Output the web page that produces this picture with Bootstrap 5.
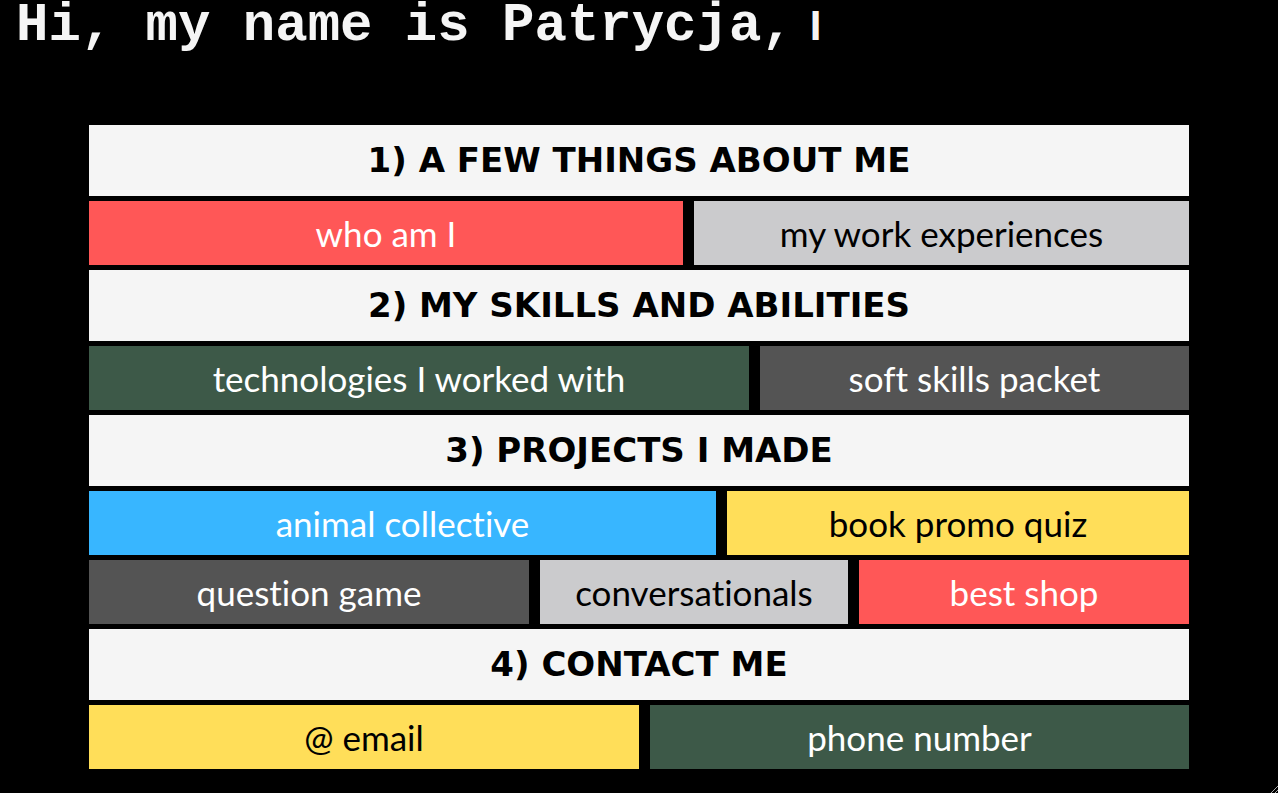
<!DOCTYPE html>
<html lang="en">
<head>
<meta charset="utf-8">
<meta name="viewport" content="width=device-width, initial-scale=1">
<title>Patrycja</title>
<link href="https://cdn.jsdelivr.net/npm/bootstrap@5.3.0/dist/css/bootstrap.min.css" rel="stylesheet">
<style>
  body { background: #000; font-family: Lato, sans-serif; }
  .intro { height: 125px; padding-left: 16px; color: #f5f5f5; font: 700 54px/52px "Liberation Mono", monospace; }
  .intro-word { font: 700 42px/52px "Liberation Sans", sans-serif; margin-left: 16px; }
  .board { max-width: 1100px; gap: 5px; }
  .board-title { background: #f5f5f5; color: #000; font: 700 34px/71px "DejaVu Sans", sans-serif; }
  .tiles { gap: 5px 1%; }
  .tile { flex-basis: 0; font-size: 35px; line-height: 48px; padding: 8px 0; color: #fff; text-align: center; text-decoration: none; font-variant-ligatures: none; }
  .red { background: #ff5757; }
  .silver { background: #cbcbcd; color: #000; }
  .green { background: #3d5948; }
  .gray { background: #545454; }
  .blue { background: #38b6ff; }
  .yellow { background: #ffde59; color: #000; }
  .w54 { flex-grow: 54; } .w45 { flex-grow: 45; }
  .w60 { flex-grow: 60; } .w39 { flex-grow: 39; }
  .w57 { flex-grow: 57; } .w42 { flex-grow: 42; }
  .w40 { flex-grow: 40; } .w28 { flex-grow: 28; } .w30 { flex-grow: 30; }
  .w50 { flex-grow: 50; } .w49 { flex-grow: 49; }
</style>
</head>
<body>
<h1 class="intro m-0 text-nowrap">Hi, my name is Patrycja,<span class="intro-word">I</span></h1>
<main class="board d-flex flex-column mx-auto">
  <h2 class="board-title m-0 text-center">1) A FEW THINGS ABOUT ME</h2>
  <div class="tiles d-flex">
    <a href="#" class="tile red w54">who am I</a>
    <a href="#" class="tile silver w45">my work experiences</a>
  </div>
  <h2 class="board-title m-0 text-center">2) MY SKILLS AND ABILITIES</h2>
  <div class="tiles d-flex">
    <a href="#" class="tile green w60">technologies I worked with</a>
    <a href="#" class="tile gray w39">soft skills packet</a>
  </div>
  <h2 class="board-title m-0 text-center">3) PROJECTS I MADE</h2>
  <div class="tiles d-flex">
    <a href="#" class="tile blue w57">animal collective</a>
    <a href="#" class="tile yellow w42">book promo quiz</a>
  </div>
  <div class="tiles d-flex">
    <a href="#" class="tile gray w40">question game</a>
    <a href="#" class="tile silver w28">conversationals</a>
    <a href="#" class="tile red w30">best shop</a>
  </div>
  <h2 class="board-title m-0 text-center">4) CONTACT ME</h2>
  <div class="tiles d-flex">
    <a href="#" class="tile yellow w50">@ email</a>
    <a href="#" class="tile green w49">phone number</a>
  </div>
</main>
<svg class="position-fixed bottom-0 end-0" width="7" height="7" viewBox="0 0 7 7" stroke="#aaa" aria-hidden="true"><path d="M0 7L7 0M4 7L7 4"/></svg>
<script src="https://cdn.jsdelivr.net/npm/bootstrap@5.3.0/dist/js/bootstrap.bundle.min.js"></script>
</body>
</html>
